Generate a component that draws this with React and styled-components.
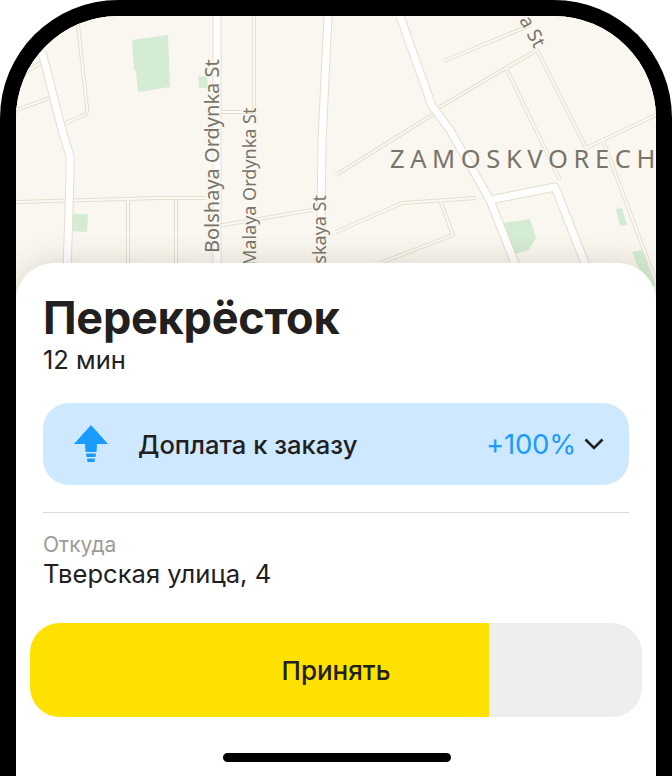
import React from 'react'
import styled, { createGlobalStyle } from 'styled-components'

const GlobalStyle = createGlobalStyle`
    html, body {
        margin: 0;
        padding: 0;
        background: #fff;
    }
    body {
        font-family: Inter, "Noto Sans", sans-serif;
        color: #21201f;
    }
`

const Phone = styled.div`
    box-sizing: border-box;
    width: 672px;
    height: 776px;
    overflow: hidden;
    background: #fff;
    border: 16px solid #000;
    border-bottom: none;
    border-radius: 118px 118px 0 0;
`

const MapArea = styled.div`
    height: 290px;
    background: #faf7f0;
    svg {
        display: block;
    }
`

const Sheet = styled.div`
    position: relative;
    box-sizing: border-box;
    height: 513px;
    margin-top: -43px;
    padding: 30px 27px 0;
    background: #fff;
    border-radius: 38px 38px 0 0;
    box-shadow: 0 -4px 28px rgba(60, 50, 30, 0.14);
    display: flex;
    flex-direction: column;
`

const Title = styled.h1`
    margin: 0;
    font-size: 45px;
    line-height: 50px;
    font-weight: 700;
    letter-spacing: -0.25px;
`

const Eta = styled.div`
    margin-top: 2px;
    font-size: 25.5px;
    line-height: 30px;
`

const Banner = styled.div`
    margin-top: 28px;
    height: 82px;
    padding: 0 25px 0 30px;
    border-radius: 26px;
    background: #cde8ff;
    display: flex;
    align-items: center;
`

const BannerLabel = styled.span`
    flex: 1;
    margin-left: 29px;
    font-size: 25.6px;
    font-weight: 500;
`

const BannerValue = styled.span`
    margin-right: 8px;
    font-size: 27.5px;
    letter-spacing: -0.2px;
    color: #1a9cff;
`

const Divider = styled.div`
    margin-top: 27px;
    height: 1px;
    background: #dcdcdc;
`

const FieldLabel = styled.div`
    margin-top: 20px;
    font-size: 21px;
    line-height: 24px;
    color: #9e9b98;
`

const FieldValue = styled.div`
    margin-top: 2px;
    font-size: 25.6px;
    line-height: 30px;
`

const AcceptButton = styled.button`
    align-self: center;
    flex: none;
    width: 612px;
    height: 94px;
    margin-top: 34px;
    border: none;
    border-radius: 30px;
    background: linear-gradient(90deg, #ffe100 ${p => p.$progress}%, #eeeeee ${p => p.$progress}%);
    font-family: inherit;
    font-size: 26px;
    font-weight: 500;
    color: #21201f;
`

const HomeBar = styled.div`
    align-self: center;
    flex: none;
    width: 228px;
    height: 9px;
    margin: 36px 0 0 2px;
    border-radius: 5px;
    background: #000;
`

// coordinates are shifted by the frame border (16px)
const mainRoads = [
    'M26 36 L46 114 L54 140 L54 160 L50 290',
    'M201 0 L201 290',
    'M312 0 L306 125 L304 290',
    'M384 0 L416 90 L434 114 L474 184 L500 250 L510 290',
    'M474 184 L539 171 L576 265',
]

const sideRoads = [
    'M62 8 L71 92 Q72 98 66 100 L50 107',
    'M0 94 L34 82',
    'M0 62 L26 46',
    'M0 186 L144 182 L190 182',
    'M112 182 L112 290',
    'M160 182 L160 290',
    'M201 96 L238 96',
    'M238 0 L238 100',
    'M201 210 L296 194',
    'M320 159 L416 99',
    'M422 92 L490 52 L521 34',
    'M490 52 L544 164',
    'M521 34 L570 132',
    'M570 132 L640 99',
    'M586 122 L640 266',
    'M320 216 L386 187 L460 182',
    'M424 184 L437 219 L364 247',
    'M428 45 L515 9',
]

const parks = [
    'M116 24 L152 19 L154 71 L122 76 L120 55 L118 54 Z',
    'M182 61 L191 60 L192 72 L183 72 Z',
    'M54 198 L72 198 L71 216 L54 215 Z',
    'M486 207 L514 203 L520 222 L514 232 L512 234 L499 238 Z',
    'M600 193 L606 192 L611 209 L604 210 Z',
    'M616 236 L626 234 L640 270 L630 270 Z',
]

function MapDrawing() {
    return (
        <svg width="640" height="290" viewBox="0 0 640 290" fill="none">
            {parks.map(d => <path key={d} d={d} fill="#d3ecd3" />)}
            <g strokeLinejoin="round">
                {sideRoads.map(d => <path key={d} d={d} stroke="#e3dfcd" strokeWidth="4" />)}
                {sideRoads.map(d => <path key={d} d={d} stroke="#fbf9f4" strokeWidth="2" />)}
                {mainRoads.map(d => <path key={d} d={d} stroke="#e3dfcd" strokeWidth="9" />)}
                {mainRoads.map(d => <path key={d} d={d} stroke="#ffffff" strokeWidth="7" />)}
            </g>
            <g fill="#78746a" stroke="#faf7f0" strokeWidth="2" paintOrder="stroke" fontFamily="'Noto Sans', sans-serif">
                <text transform="translate(203 237) rotate(-90)" fontSize="20">Bolshaya Ordynka St</text>
                <text transform="translate(240 250) rotate(-90)" fontSize="18">Malaya Ordynka St</text>
                <text transform="translate(310 179) rotate(-90)" fontSize="18" textAnchor="end">Ordynskaya St</text>
                <text transform="translate(503 4) rotate(62)" fontSize="19">a St</text>
                <text x="374" y="152" fontSize="25.5" letterSpacing="5.6">ZAMOSKVORECHYE</text>
            </g>
        </svg>
    )
}

function App() {
    return (
        <Phone>
            <GlobalStyle />
            <MapArea>
                <MapDrawing />
            </MapArea>
            <Sheet>
                <Title>Перекрёсток</Title>
                <Eta>12 мин</Eta>
                <Banner>
                    <svg width="36" height="40" viewBox="0 0 36 40" fill="#1a9cff">
                        <path d="M18 1 L35 20 L24 20 L23.5 28 L12.5 28 L12 20 L1 20 Z" />
                        <path d="M13 29.5 H23 L22.5 33 H13.5 Z" />
                        <path d="M14 34.5 H22 L21.5 38 H14.5 Z" />
                    </svg>
                    <BannerLabel>Доплата к заказу</BannerLabel>
                    <BannerValue>+100%</BannerValue>
                    <svg width="20" height="12" viewBox="0 0 20 12" fill="none">
                        <path d="M1.5 1.5 L10 10 L18.5 1.5" stroke="#21201f" strokeWidth="2.6" />
                    </svg>
                </Banner>
                <Divider />
                <FieldLabel>Откуда</FieldLabel>
                <FieldValue>Тверская улица, 4</FieldValue>
                <AcceptButton $progress={75}>Принять</AcceptButton>
                <HomeBar />
            </Sheet>
        </Phone>
    )
}

export default App
